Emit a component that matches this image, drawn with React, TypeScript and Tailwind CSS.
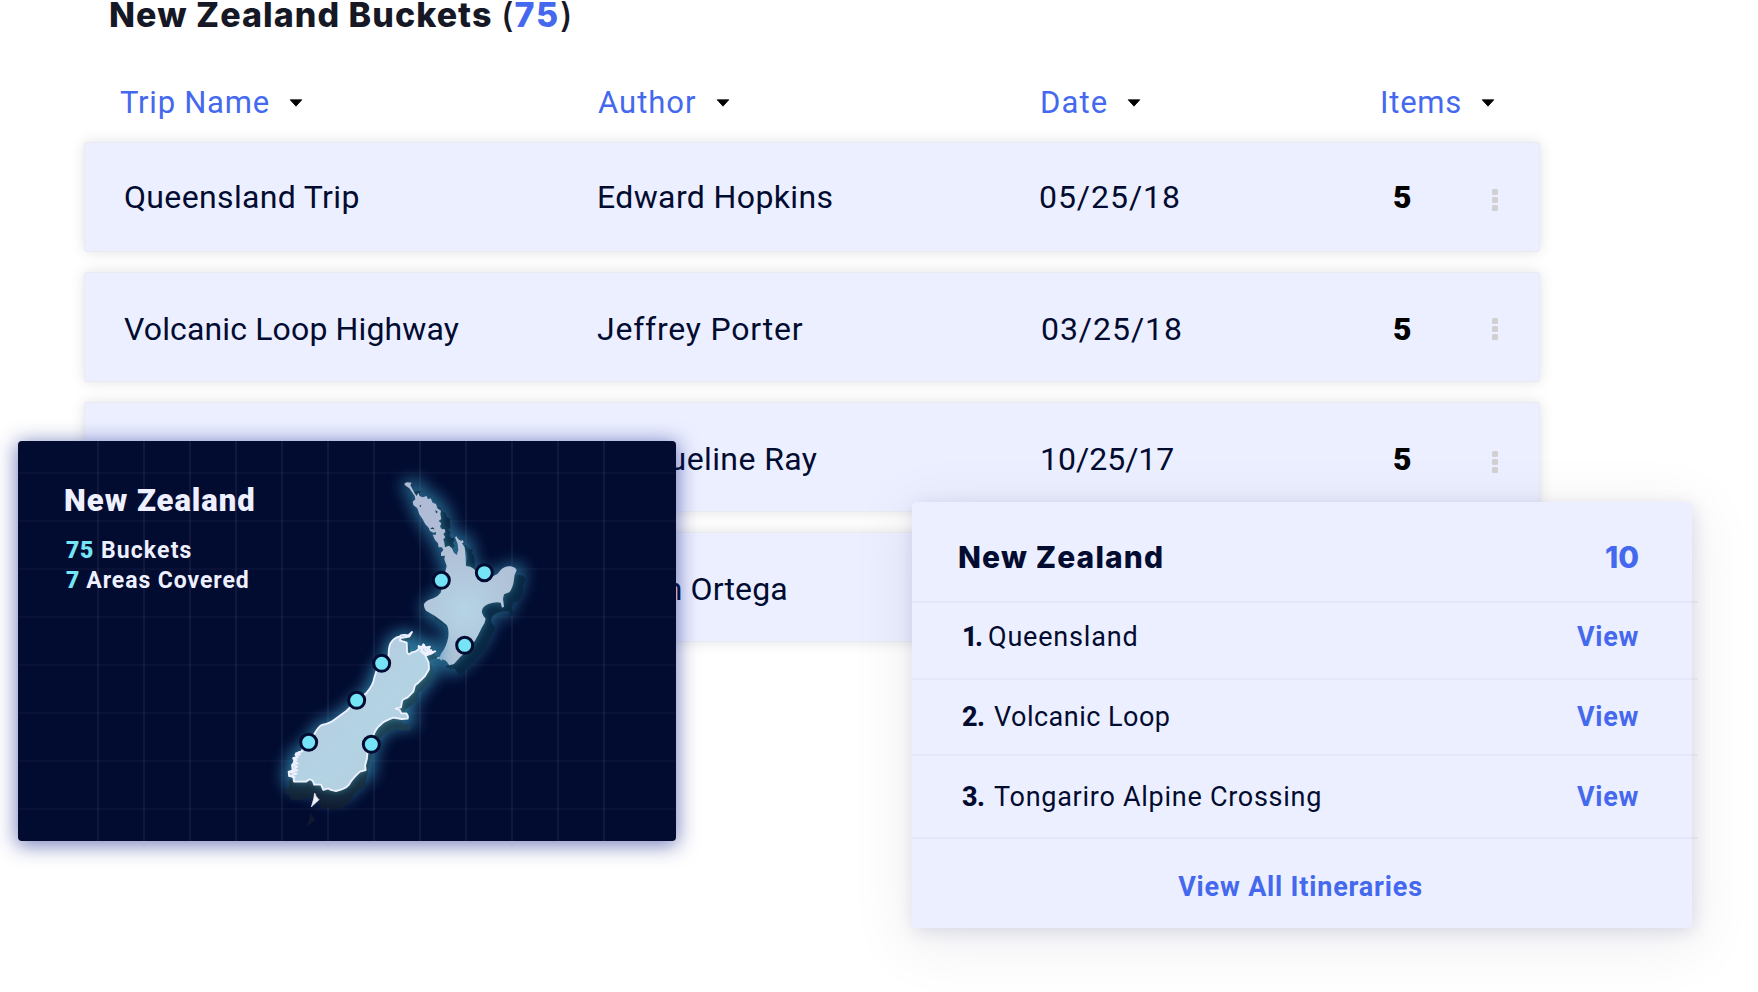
const NORTH =
  "M73 71 L80 67 L95 68 L91 75 L104 100 L110 108 L115 98 L119 108 L128 112 L140 108 L144 118 L152 115 L158 128 L168 132 L172 145 L183 152 L181 162 L184 177 L176 183 L184 190 L180 200 L186 208 L194 207 L196 216 L190 222 L196 232 L190 238 L193 250 L195 262 L207 257 L216 265 L222 278 L230 285 L235 270 L233 252 L225 232 L229 229 L235 238 L243 243 L248 240 L251 247 L246 250 L254 262 L257 290 L258 318 Q272 318 282 327 L300 350 L340 348 L352 342 L362 330 Q375 317 392 319 Q408 322 410 331 Q402 345 402 358 Q400 382 388 397 L372 403 L369 416 L372 440 L366 443 L362 428 Q345 425 325 432 Q303 442 306 458 Q310 470 317 476 Q316 488 306 502 L295 524 L285 542 L262 570 L240 592 L222 612 L208 616 L198 602 L187 598 L184 603 L180 597 L171 597 L171 589 L180 590 L182 583 Q200 560 205 530 Q207 505 200 495 Q185 482 165 468 L138 452 Q130 440 132 432 Q140 420 160 415 Q175 408 182 398 L190 360 L197 330 L200 318 L193 298 L195 287 L183 288 L183 278 L190 270 L186 262 L176 262 L174 250 L165 240 L158 224 L168 224 L168 216 L160 218 L150 213 L146 203 L136 193 L128 178 L118 163 L112 145 L100 135 L98 125 L106 118 L104 108 L88 85 L75 76Z";

const SOUTH =
  "M356 140 Q355 105 365 95 Q375 82 388 80 Q392 74 405 75 L415 76 L426 66 L418 80 L404 82 L392 84 L390 92 Q402 95 410 98 Q411 110 411 125 Q413 132 418 133 L425 127 L435 125 L446 118 L446 108 L455 112 L460 103 L466 112 L480 110 L474 118 L484 121 L478 127 L496 124 L484 131 L466 137 L470 145 L476 158 L477 178 L465 198 L445 218 L435 226 L430 245 L413 262 Q396 268 396 275 L393 292 L377 296 L389 300 L394 310 L409 310 Q416 318 413 326 L395 327 L370 323 Q345 332 335 341 Q318 354 312 372 L300 400 L292 432 Q292 450 285 465 L287 480 L270 485 Q245 508 237 524 Q225 538 198 543 Q180 540 175 535 L160 540 L153 524 L132 524 Q130 508 118 508 L108 515 L72 515 L70 500 L57 498 L56 485 L68 482 L66 465 L74 455 L70 445 L80 440 L78 430 L96 424 L98 415 L115 398 L133 372 Q145 350 155 345 Q180 340 192 330 L230 302 L260 272 L290 248 Q310 225 313 203 L320 180 L340 160Z";

const FJORDS =
  "M96 424 L84 428 L90 434 L76 434 L84 442 L70 444 L80 450 L72 456 L84 460 L68 466 L82 470 L70 476 L82 481 L60 486 L80 491 L60 498 L76 503";

const SOUNDS =
  "M444 122 L450 110 L456 122 L462 104 L466 121 L478 112 L470 128 L484 122 L464 134 L452 124 L476 130";

const STEWART = "M134 549 L139 560 L147 569 L139 577 L132 583 L124 591 L128 577 L131 567Z";

const northMarkers = [
  [184, 361],
  [313, 338],
  [254, 556],
];
const southMarkers = [
  [335, 160],
  [260, 271],
  [116, 397],
  [304, 403],
];
const gridX = [80, 126, 172, 218, 264, 310, 356, 402, 448, 494, 540, 586];
const gridY = [32, 80, 128, 176, 224, 272, 320, 368];

function Marker({ at }: { at: number[] }) {
  return <circle cx={at[0]} cy={at[1]} r="24" fill="#76e4f7" stroke="#020b30" strokeWidth="9" />;
}

function NewZealandMap() {
  return (
    <svg className="absolute inset-0" width="658" height="400" viewBox="0 0 658 400" aria-hidden="true">
      <defs>
        <radialGradient id="northFill" gradientUnits="userSpaceOnUse" cx="255" cy="450" r="230">
          <stop offset="0" stopColor="#b4d4e5" />
          <stop offset="0.6" stopColor="#b1c4d9" />
          <stop offset="1" stopColor="#b0bcd5" />
        </radialGradient>
        <linearGradient id="southFill" x1="0" y1="0" x2="1" y2="1">
          <stop offset="0.2" stopColor="#b8c7dd" />
          <stop offset="0.55" stopColor="#b3d4e4" />
          <stop offset="0.9" stopColor="#b6c9dd" />
        </linearGradient>
        <linearGradient id="southShade" x1="0" y1="0" x2="0" y2="1">
          <stop offset="0" stopColor="#1f4a5c" />
          <stop offset="0.75" stopColor="#1b3a4a" />
          <stop offset="1" stopColor="#111a2c" />
        </linearGradient>
        <filter id="wide" x="-40%" y="-40%" width="180%" height="180%">
          <feGaussianBlur stdDeviation="24" />
        </filter>
        <filter id="tight" x="-20%" y="-20%" width="140%" height="140%">
          <feGaussianBlur stdDeviation="11" />
        </filter>
        <clipPath id="northShadow">
          <path d={NORTH} transform="translate(28 26)" />
        </clipPath>
        <clipPath id="southShadow">
          <path d={SOUTH} transform="matrix(1.055 0 0 1.105 -14 0)" />
        </clipPath>
      </defs>
      <g fill="#ffffff">
        {gridX.map((x) => (
          <rect key={x} x={x - 1} y="0" width="2" height="400" opacity="0.06" />
        ))}
        {gridY.map((y) => (
          <rect key={y} x="0" y={y - 1} width="658" height="2" opacity="0.03" />
        ))}
      </g>
      <g transform="translate(362 19) scale(0.33333)">
        <path d={NORTH} transform="translate(10 8)" fill="#3793b8" stroke="#3793b8" strokeWidth="36" opacity="0.66" filter="url(#wide)" />
        <path d={NORTH} transform="translate(28 26)" fill="#06243f" opacity="0.8" />
        <g clipPath="url(#northShadow)">
          <path d={NORTH} fill="#4fa3b8" opacity="0.5" filter="url(#tight)" />
        </g>
        <path d={NORTH} fill="url(#northFill)" />
        <path d="M118 138 L124 134 L122 142Z M150 206 L158 202 L164 208Z M166 150 L174 156 L168 160Z" fill="#1b3a58" />
      </g>
      <g transform="translate(252 169) scale(0.33333)">
        <path d={SOUTH} transform="translate(4 8)" fill="#3793b8" stroke="#3793b8" strokeWidth="40" opacity="0.78" filter="url(#wide)" />
        <path d={SOUTH} transform="matrix(1.055 0 0 1.105 -14 0)" fill="url(#southShade)" opacity="0.85" />
        <path d={STEWART} transform="matrix(1.055 0 0 1.105 -20 0)" fill="#111a2c" />
        <g clipPath="url(#southShadow)">
          <path d={SOUTH} fill="#5cb0b8" opacity="0.6" filter="url(#tight)" />
        </g>
        <path d={SOUTH} fill="url(#southFill)" stroke="#eef1ff" strokeWidth="5.5" strokeLinejoin="round" />
        <path d={FJORDS} fill="none" stroke="#eef1ff" strokeWidth="5" strokeLinejoin="round" />
        <path d={SOUNDS} fill="none" stroke="#eef1ff" strokeWidth="5" strokeLinejoin="round" />
        <path d={STEWART} fill="#f0f2ff" stroke="#f0f2ff" strokeWidth="2" />
      </g>
      <g transform="translate(362 19) scale(0.33333)">
        {northMarkers.map((m) => (
          <Marker key={m[0]} at={m} />
        ))}
      </g>
      <g transform="translate(252 169) scale(0.33333)">
        {southMarkers.map((m) => (
          <Marker key={m[0]} at={m} />
        ))}
      </g>
    </svg>
  );
}

function MapCard() {
  return (
    <section className="absolute top-[441px] left-[18px] h-[400px] w-[658px] rounded-[4px] bg-[#020b30] shadow-[0_3px_20px_2px_rgba(22,38,140,0.55)]">
      <NewZealandMap />
      <div className="relative pt-[42px] pl-[46px] text-[#eef0ff]">
        <h2 className="text-[31px] leading-[36px] font-black tracking-[1px]">New Zealand</h2>
        <div className="mt-[17px] pl-[2px] text-[23px] leading-[30px] font-bold">
          <p className="flex gap-[7px]">
            <span className="font-black tracking-[0.6px] text-[#76e4f7]">75</span>
            <span className="tracking-[1.15px]">Buckets</span>
          </p>
          <p className="flex gap-[7px]">
            <span className="font-black text-[#76e4f7]">7</span>
            <span className="tracking-[0.92px]">Areas Covered</span>
          </p>
        </div>
      </div>
    </section>
  );
}

const itineraries = [
  { n: "1.", name: "Queensland", row: "h-[77px] pb-[6px]", num: "w-[26px] tracking-[-2.5px]", text: "tracking-[0.81px]" },
  { n: "2.", name: "Volcanic Loop", row: "h-[76px]", num: "w-[32px] tracking-[-0.5px]", text: "tracking-[0.48px]" },
  { n: "3.", name: "Tongariro Alpine Crossing", row: "h-[83px] pt-[2px]", num: "w-[32px] tracking-[-0.5px]", text: "tracking-[0.73px]" },
];

function ItineraryCard() {
  return (
    <section className="absolute top-[502px] left-[912px] flex h-[426px] w-[780px] flex-col rounded-[5px] bg-[#ecefff] text-[27px] text-[#020b30] shadow-[0_12px_60px_10px_rgba(10,20,60,0.06),2px_4px_18px_rgba(10,20,90,0.12)]">
      <header className="flex h-[101px] w-[786px] items-center justify-between border-b-2 border-[#0a1450]/[0.035] pt-[11px] pr-[59px] pl-[46px] font-['Inter',sans-serif] text-[30px] font-extrabold">
        <h2 className="tracking-[1.14px]">New Zealand</h2>
        <span className="text-[#4468ee]">10</span>
      </header>
      {itineraries.map((it) => (
        <div key={it.n} className={`flex w-[786px] items-center border-b-2 border-[#0a1450]/[0.035] pr-[59px] pl-[50px] ${it.row}`}>
          <span className={`font-extrabold ${it.num}`}>{it.n}</span>
          <span className={`flex-1 ${it.text}`}>{it.name}</span>
          <a className="font-bold tracking-[0.7px] text-[#4468ee]">View</a>
        </div>
      ))}
      <footer className="flex flex-1 items-center justify-center pt-[7px] pr-[3px] font-bold tracking-[0.82px] text-[#4468ee]">
        View All Itineraries
      </footer>
    </section>
  );
}

const columns = [
  { label: "Trip Name", track: "tracking-[0.75px]" },
  { label: "Author", track: "tracking-[1px]" },
  { label: "Date", track: "tracking-[1.1px]" },
  { label: "Items", track: "tracking-[0.78px]" },
];

const trips = [
  { name: "Queensland Trip", nameCls: "pl-px tracking-[0.35px]", author: "Edward Hopkins", authorCls: "tracking-[0.38px]", date: "05/25/18", dateCls: "tracking-[0.95px]", row: "", menu: "mt-[6px]" },
  { name: "Volcanic Loop Highway", nameCls: "pl-px tracking-[0.14px]", author: "Jeffrey Porter", authorCls: "tracking-[0.78px]", date: "03/25/18", dateCls: "pl-[2px] tracking-[0.95px]", row: "pt-[4px]", menu: "" },
  { name: "", nameCls: "", author: "Jacqueline Ray", authorCls: "tracking-[0.4px]", date: "10/25/17", dateCls: "pl-px", row: "pt-[4px]", menu: "mt-[6px]" },
  { name: "", nameCls: "", author: "Justin Ortega", authorCls: "-ml-[3px] tracking-[0.13px]", date: "", dateCls: "", row: "pt-[4px]", menu: "" },
];

function Caret() {
  return (
    <svg width="14" height="8" viewBox="0 0 14 8" aria-hidden="true">
      <path d="M1.2 0.8 H12.8 L7 7.2Z" fill="#000" stroke="#000" strokeWidth="0.8" strokeLinejoin="round" />
    </svg>
  );
}

function Kebab({ className }: { className: string }) {
  return (
    <span className={`flex flex-col gap-[2px] ${className}`}>
      <i className="h-[6px] w-[6px] rounded-[1.5px] bg-[#d0d0d0]" />
      <i className="h-[6px] w-[6px] rounded-[1.5px] bg-[#d0d0d0]" />
      <i className="h-[6px] w-[6px] rounded-[1.5px] bg-[#d0d0d0]" />
    </span>
  );
}

export default function App() {
  return (
    <main className="relative h-[992px] w-[1758px] overflow-hidden bg-white font-['Roboto',sans-serif]">
      <h1 className="pl-[109px] font-['Inter',sans-serif] text-[34px] leading-[30px] font-extrabold tracking-[1.05px] text-[#161825]">
        New Zealand Buckets <span className="font-medium">(</span>
        <span className="tracking-[1.8px] text-[#4468ee]">75</span>
        <span className="font-medium">)</span>
      </h1>
      <div className="mt-[50px] grid h-[40px] grid-cols-[478px_442px_340px_1fr] items-center pl-[120px] text-[31px] text-[#4468ee]">
        {columns.map((c) => (
          <div key={c.label} className="flex items-center gap-[19px]">
            <span className={c.track}>{c.label}</span>
            <Caret />
          </div>
        ))}
      </div>
      <div className="mt-[22px] ml-[84px] flex w-[1456px] flex-col gap-[20px]">
        {trips.map((t) => (
          <div
            key={t.author}
            className={`grid h-[110px] grid-cols-[474px_442px_354px_99px_1fr] items-center rounded-[3px] border border-[#e9eaf2] bg-[#ecefff] pl-[38px] text-[32px] text-[#020b30] shadow-[0_0_14px_rgba(0,0,0,0.12)] ${t.row}`}
          >
            <span className={t.nameCls}>{t.name}</span>
            <span className={t.authorCls}>{t.author}</span>
            <span className={t.dateCls}>{t.date}</span>
            <span className="font-black text-black">5</span>
            <Kebab className={t.menu} />
          </div>
        ))}
      </div>
      <MapCard />
      <ItineraryCard />
    </main>
  );
}
